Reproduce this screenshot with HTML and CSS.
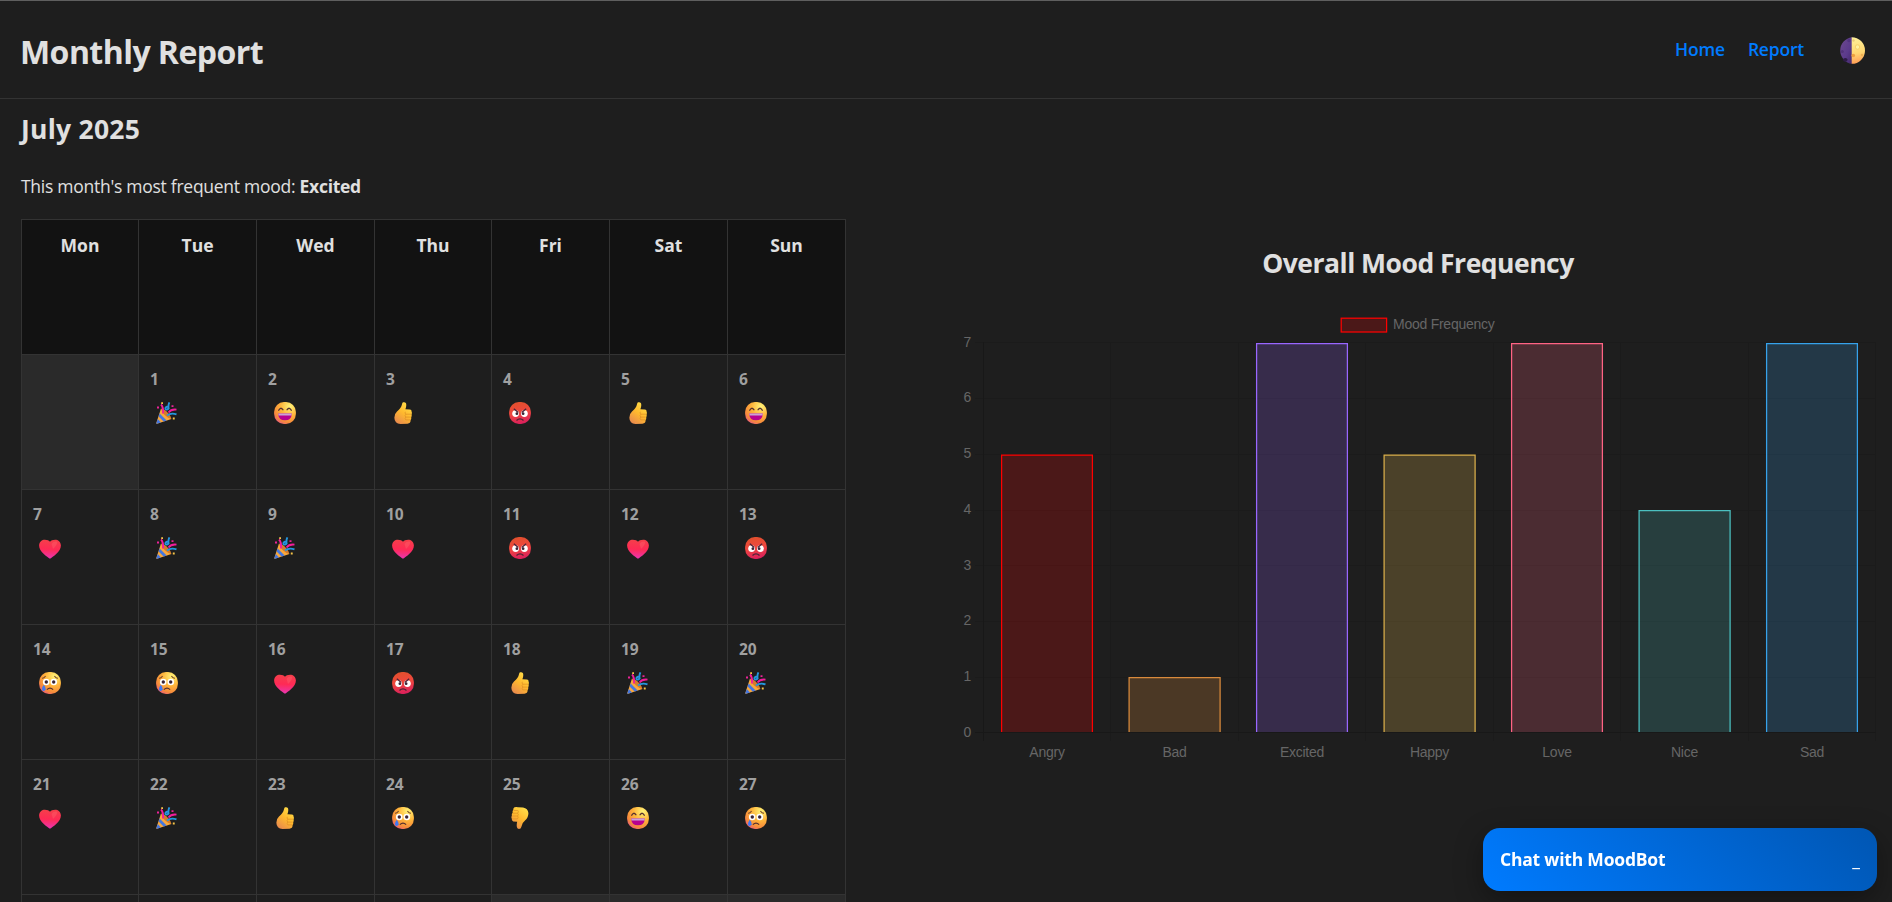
FILE: index.html
```html
<!DOCTYPE html>
<html lang="en">
<head>
<meta charset="utf-8">
<title>Monthly Report</title>
<link rel="stylesheet" href="styles.css">
</head>
<body>
<svg class="defs" width="0" height="0" aria-hidden="true">
  <defs>
    <radialGradient id="gold" cx="0.72" cy="0.2" r="0.95"><stop offset="0" stop-color="#fff478"/><stop offset="0.45" stop-color="#ffb43a"/><stop offset="0.78" stop-color="#f58a3c"/><stop offset="1" stop-color="#e8508c"/></radialGradient>
    <linearGradient id="rage" x1="0.3" y1="0" x2="0.5" y2="1"><stop offset="0" stop-color="#e0502c"/><stop offset="0.5" stop-color="#f0473f"/><stop offset="1" stop-color="#d91f5c"/></linearGradient>
    <linearGradient id="love" x1="0.5" y1="0" x2="0.45" y2="1"><stop offset="0" stop-color="#f4404a"/><stop offset="0.5" stop-color="#ff2a55"/><stop offset="1" stop-color="#e936b4"/></linearGradient>
    <linearGradient id="hand" x1="0.8" y1="0" x2="0.2" y2="1"><stop offset="0" stop-color="#ffe04a"/><stop offset="0.5" stop-color="#ffb92e"/><stop offset="1" stop-color="#e8894e"/></linearGradient>
    <linearGradient id="lit" x1="0.3" y1="0" x2="0.4" y2="1"><stop offset="0" stop-color="#fff09a"/><stop offset="0.6" stop-color="#ffd772"/><stop offset="1" stop-color="#ff9b55"/></linearGradient>
    <linearGradient id="dark" x1="0" y1="0" x2="1" y2="1"><stop offset="0" stop-color="#6d4a8e"/><stop offset="0.6" stop-color="#5b3a8c"/><stop offset="1" stop-color="#43296a"/></linearGradient>
  </defs>
  <symbol id="party" viewBox="0 0 22 22">
    <path d="M5 6.5 15.5 17 1 21.8Q0 22 .3 21z" fill="#f9a83c"/>
    <path d="M3.6 11.5 10.6 18.6 7.6 19.6 2.6 14.6zM1.8 17 5 20.4 1.6 21.6Q0 22 .5 20.8z" fill="#4577e0"/>
    <path d="M5.2 6.8Q9 7 12 11 15 14 15.3 16.8 12 16.5 8.6 13 5.4 9.600 5.200 6.800z" fill="#d67a2c"/>
    <path d="M5 2.500Q7.500 5 7 11.500M12.500 10.500Q15 7 20.500 7.600" stroke="#f31d9b" stroke-width="1.900" fill="none"/>
    <path d="M13.400.400Q12 3 12.600 6.500 10.500 8.500 9.500 7 9 4.800 12.500 4.500M11 13.500Q15 10.500 20.500 12.400" stroke="#2596e0" stroke-width="1.900" fill="none"/>
    <path d="M1 4.600h2v1.800H1zM15.500 3.200h2V5h-2z" fill="#e82396"/>
    <path d="M5.200.300h1.800v1.800H5.200zM16.800 15.600h1.900v1.900h-1.900z" fill="#f7c548"/>
  </symbol>
  <symbol id="happy" viewBox="0 0 22 22">
    <rect x=".1" y=".1" width="21.800" height="21.800" rx="9.800" fill="url(#gold)"/>
    <path d="M4.700 8.200Q6.500 4.600 8.900 7.700M13.100 7.700Q15.500 4.600 17.300 8.200" stroke="#55302f" stroke-width="1.300" fill="none" stroke-linecap="round"/>
    <path d="M4.200 11.400h13.600Q17.500 18.300 11 18.300 4.500 18.300 4.200 11.400z" fill="#b8028f"/>
    <path d="M4.200 11.400h13.600l-.4 2H4.600z" fill="#c9a3d6"/>
  </symbol>
  <symbol id="sad" viewBox="0 0 22 22">
    <rect x=".1" y=".1" width="21.800" height="21.800" rx="9.800" fill="url(#gold)"/>
    <path d="M3.200 6.400Q5.300 5.900 6.600 4M15.400 4Q16.700 5.900 18.800 6.400" stroke="#7b4a2c" stroke-width="1.200" fill="none"/>
    <circle cx="7.200" cy="10" r="3.300" fill="#fff"/><circle cx="14.800" cy="10" r="3.300" fill="#fff"/>
    <circle cx="7.300" cy="10" r="1.700" fill="#3b2537"/><circle cx="14.700" cy="10" r="1.700" fill="#3b2537"/>
    <path d="M7.900 17.600Q11 14.600 14.100 17.600" stroke="#55302f" stroke-width="1.300" fill="none"/>
    <path d="M4.800 12.800Q7 15.500 6.600 17.300 6 19 4.600 19 3 18.800 3 17 3.100 15 4.800 12.800z" fill="#3f78f2"/>
  </symbol>
  <symbol id="angry" viewBox="0 0 22 22">
    <rect x=".1" y=".1" width="21.800" height="21.800" rx="9.800" fill="url(#rage)"/>
    <circle cx="6.600" cy="11.600" r="3.400" fill="#fff"/><circle cx="15.400" cy="11.600" r="3.400" fill="#fff"/>
    <circle cx="7.900" cy="11.700" r="1.400" fill="#3b2537"/><circle cx="14.100" cy="11.700" r="1.400" fill="#3b2537"/>
    <path d="M4.800 6.800 9.300 10.600M17.200 6.800 12.700 10.600M7.500 18.500Q11 15.300 14.500 18.500" stroke="#4d2438" stroke-width="1.300" fill="none"/>
  </symbol>
  <symbol id="heart" viewBox="0 0 22 22">
    <path d="M11 21.800C8.500 19.800 0 15 .1 8.500.2 4.700 3 2.700 5.800 2.700 8.300 2.700 10.200 3.500 11 4.800 11.800 3.500 13.700 2.700 16.200 2.700 19 2.700 21.800 4.700 21.900 8.500 22 15 13.500 19.800 11 21.800z" fill="url(#love)"/>
    <path d="M12.500 7Q14.500 3.800 18 4.800 18.500 8 14 12z" fill="#ff6a72" opacity=".35"/>
  </symbol>
  <symbol id="up" viewBox="0 0 22 22">
    <path d="M11 .3Q13 -.3 14 1.200 14.800 3.500 13.400 7.300L18 7.400Q19.800 7.700 19.500 9.600 20.200 10.600 19.600 12.300 20 13.800 19.200 15.400 19.500 17 18.600 18.100 18.700 21.400 15.500 21.700L8.500 21.900Q2.500 21.500 2.400 16 2.200 12 5 9.500 9.200 6.300 10 2.300 10.200.700 11 .3z" fill="url(#hand)"/>
    <path d="M13.400 9.800Q12.400 11 13.800 12.200 12.400 13.600 13.700 15.100 12.500 16.500 13.800 17.900M13.800 12.200h5.300M13.700 15.100h5M13.800 17.900h4.300" stroke="#dc8f25" stroke-width=".7" fill="none"/>
  </symbol>
  <symbol id="down" viewBox="0 0 22 22">
    <path d="M5.500.300Q7-.2 9 .200L14 .400Q19 1.200 19.400 6 19.500 10.500 16 13.600 12.800 16 12.300 20 12 21.900 9.900 21.900 7.900 21.900 7.800 19.500 7.500 17.500 8.200 14.700L4.300 14.400Q2.500 13.800 2.900 12 1.900 10.300 2.900 8.800 2.400 7 3.700 5.800 3.200 4 4.200 3 4.200 1 5.500.300z" fill="url(#hand)"/>
    <path d="M9 3.500Q10 5 8.600 6.200 10 7.800 8.600 9 9.700 10.500 8.400 11.900M8.800 3.500H4.500M8.600 6.200H4M8.600 9H3.300M8.400 11.900H3.200" stroke="#dc8f25" stroke-width=".7" fill="none"/>
  </symbol>
</svg>

<header class="topbar">
  <h1 class="title">Monthly Report</h1>
  <nav class="nav">
    <a class="nav-link" href="#">Home</a>
    <a class="nav-link report" href="#">Report</a>
    <button class="theme" aria-label="Toggle theme">
      <svg width="27" height="27" viewBox="0 0 27 27">
        <path d="M14 .2A13.400 13.400 0 0 0 14 26.800z" fill="url(#dark)"/>
        <path d="M13.700.2A13.300 13.300 0 0 1 13.700 26.800z" fill="url(#lit)"/>
        <ellipse cx="7.300" cy="22.800" rx="2.300" ry="1.900" fill="#2d1b46"/>
        <circle cx="4.300" cy="14.500" r="1.500" fill="#503279"/><circle cx="11" cy="3.500" r="1.700" fill="#523480"/>
        <circle cx="19.500" cy="10" r="2.200" fill="#fff1a0" stroke="#f5c75c" stroke-width=".7"/>
        <circle cx="15.300" cy="18.500" r="1.800" fill="#eda03f"/><circle cx="24" cy="18" r="1.300" fill="#eeb152"/><circle cx="15.500" cy="3.500" r="1.200" fill="#e9cb75"/>
      </svg>
    </button>
  </nav>
</header>

<main class="page">
  <section class="month">
    <h2 class="heading month-title">July 2025</h2>
    <p class="summary">This month's most frequent mood: <strong>Excited</strong></p>
    <div class="calendar">
      <div class="dow">Mon</div><div class="dow">Tue</div><div class="dow">Wed</div><div class="dow">Thu</div><div class="dow">Fri</div><div class="dow">Sat</div><div class="dow">Sun</div>
      <div class="day empty"></div>
      <div class="day"><b>1</b><svg class="mood"><use href="#party"/></svg></div>
      <div class="day"><b>2</b><svg class="mood"><use href="#happy"/></svg></div>
      <div class="day"><b>3</b><svg class="mood"><use href="#up"/></svg></div>
      <div class="day"><b>4</b><svg class="mood"><use href="#angry"/></svg></div>
      <div class="day"><b>5</b><svg class="mood"><use href="#up"/></svg></div>
      <div class="day"><b>6</b><svg class="mood"><use href="#happy"/></svg></div>
      <div class="day"><b>7</b><svg class="mood"><use href="#heart"/></svg></div>
      <div class="day"><b>8</b><svg class="mood"><use href="#party"/></svg></div>
      <div class="day"><b>9</b><svg class="mood"><use href="#party"/></svg></div>
      <div class="day"><b>10</b><svg class="mood"><use href="#heart"/></svg></div>
      <div class="day"><b>11</b><svg class="mood"><use href="#angry"/></svg></div>
      <div class="day"><b>12</b><svg class="mood"><use href="#heart"/></svg></div>
      <div class="day"><b>13</b><svg class="mood"><use href="#angry"/></svg></div>
      <div class="day"><b>14</b><svg class="mood"><use href="#sad"/></svg></div>
      <div class="day"><b>15</b><svg class="mood"><use href="#sad"/></svg></div>
      <div class="day"><b>16</b><svg class="mood"><use href="#heart"/></svg></div>
      <div class="day"><b>17</b><svg class="mood"><use href="#angry"/></svg></div>
      <div class="day"><b>18</b><svg class="mood"><use href="#up"/></svg></div>
      <div class="day"><b>19</b><svg class="mood"><use href="#party"/></svg></div>
      <div class="day"><b>20</b><svg class="mood"><use href="#party"/></svg></div>
      <div class="day"><b>21</b><svg class="mood"><use href="#heart"/></svg></div>
      <div class="day"><b>22</b><svg class="mood"><use href="#party"/></svg></div>
      <div class="day"><b>23</b><svg class="mood"><use href="#up"/></svg></div>
      <div class="day"><b>24</b><svg class="mood"><use href="#sad"/></svg></div>
      <div class="day"><b>25</b><svg class="mood"><use href="#down"/></svg></div>
      <div class="day"><b>26</b><svg class="mood"><use href="#happy"/></svg></div>
      <div class="day"><b>27</b><svg class="mood"><use href="#sad"/></svg></div>
      <div class="day"></div><div class="day"></div><div class="day"></div><div class="day"></div>
      <div class="day empty"></div><div class="day empty"></div><div class="day empty"></div>
    </div>
  </section>

  <section class="report-chart">
    <h2 class="heading chart-title">Overall Mood Frequency</h2>
    <svg class="chart" width="932" height="460" viewBox="950 310 932 460">
      <g class="grid">
        <path d="M975 342.500H1875.500M975 398.500H1875.500M975 454.500H1875.500M975 510.500H1875.500M975 565.500H1875.500M975 621.500H1875.500M975 677.500H1875.500"/>
        <path d="M1110.500 342V741M1238.500 342V741M1365.500 342V741M1493.500 342V741M1620.500 342V741M1748.500 342V741M1875.500 342V741"/>
        <path class="axis" d="M983.500 342V741M975 732.500H1875.500"/>
      </g>
      <rect x="1341.200" y="318.200" width="45.400" height="13.800" fill="#ff000033" stroke="#f00" stroke-width="1.250"/>
      <text x="1393" y="328.600">Mood Frequency</text>
      <g class="bars">
        <path fill="#ff000033" stroke="#f00" d="M1001.600 732V455.100H1092.400V732"/>
        <path fill="#ff9f4033" stroke="#d98a3c" d="M1129.100 732V677.600H1220.100V732"/>
        <path fill="#9966ff33" stroke="#96f" d="M1256.600 732V343.600H1347.400V732"/>
        <path fill="#ffcd5633" stroke="#d9ae4b" d="M1384.100 732V455.100H1475.100V732"/>
        <path fill="#ff638433" stroke="#ff6384" d="M1511.600 732V343.600H1602.400V732"/>
        <path fill="#4bc0c033" stroke="#4bc0c0" d="M1639.100 732V510.600H1730.100V732"/>
        <path fill="#36a2eb33" stroke="#36a2eb" d="M1766.600 732V343.600H1857.400V732"/>
      </g>
      <g text-anchor="end">
        <text x="971" y="347">7</text><text x="971" y="402">6</text><text x="971" y="458">5</text><text x="971" y="514">4</text><text x="971" y="570">3</text><text x="971" y="625">2</text><text x="971" y="681">1</text><text x="971" y="737">0</text>
      </g>
      <g text-anchor="middle">
        <text x="1047" y="757">Angry</text><text x="1174.500" y="757">Bad</text><text x="1302" y="757">Excited</text><text x="1429.500" y="757">Happy</text><text x="1557" y="757">Love</text><text x="1684.500" y="757">Nice</text><text x="1812" y="757">Sad</text>
      </g>
    </svg>
  </section>
</main>

<aside class="chat">
  <span class="chat-title">Chat with MoodBot</span>
  <span class="minimize">_</span>
</aside>
</body>
</html>
```
FILE: styles.css
```css
* { box-sizing: border-box; }
body {
  margin: 0;
  height: 902px;
  overflow: hidden;
  background: #1e1e1e;
  color: #e0e0e0;
  font-family: "Open Sans", "Noto Sans", sans-serif;
}
.defs { position: absolute; }
.topbar {
  display: flex;
  justify-content: space-between;
  align-items: center;
  height: 99px;
  padding: 0 27px 0 20px;
  border-top: 1px solid #5f5f5f;
  border-bottom: 1px solid #333;
}
.title { margin: 4px 0 0; font-size: 32px; line-height: 44px; letter-spacing: -0.55px; }
.nav { display: flex; align-items: center; margin-bottom: 2px; }
.nav-link {
  color: #007bff;
  font-size: 17.500px;
  font-weight: 600;
  line-height: 24px;
  letter-spacing: -0.2px;
  text-decoration: none;
}
.report { margin-left: 23px; }
.theme { display: flex; margin: 3px 0 0 34px; padding: 0; border: 0; background: none; }
.page { display: flex; height: 803px; overflow: hidden; }
.month { width: 825px; margin-left: 21px; }
.heading { margin: 0; font-size: 26.500px; line-height: 36px; letter-spacing: -0.5px; }
.month-title { margin-top: 12px; letter-spacing: 0.25px; }
.summary { margin: 27px 0 21px; font-size: 17.500px; line-height: 24px; letter-spacing: -0.270px; }
.calendar {
  display: grid;
  grid-template-columns: 116px 117px 117px 116px 117px 117px 117px;
  grid-auto-rows: 134px;
  gap: 1px;
  padding: 1px;
  background: #333;
}
.dow {
  padding-top: 13px;
  background: #121212;
  font-size: 17.500px;
  font-weight: 700;
  line-height: 24px;
  text-align: center;
}
.day { padding: 13px 0 0 11px; background: #1e1e1e; }
.empty { background: #2a2a2a; }
.day b { display: block; color: #a0a0a0; font-size: 15.500px; line-height: 22px; }
.mood { display: block; width: 22px; height: 22px; margin: 12px 0 0 6px; }
.report-chart { width: 932px; margin: 146px 0 0 104px; }
.chart-title { padding-left: 4px; text-align: center; }
.chart { display: block; margin-top: 29px; }
.chart text { fill: #666; font: 14px "Liberation Sans", Arial, sans-serif; letter-spacing: -0.25px; }
.grid { fill: none; stroke: #1b1b1b; }
.axis { stroke: #181818; }
.bars { stroke-width: 1.250px; }
.chat {
  position: fixed;
  left: 1483px;
  top: 828px;
  display: flex;
  justify-content: space-between;
  align-items: center;
  width: 394px;
  height: 63px;
  padding: 0 17px 1px;
  border-radius: 17px;
  background: linear-gradient(45deg, #007bff, #0056b3);
  box-shadow: 0 9px 28px rgba(0, 0, 0, 0.35);
  color: #fff;
}
.chat-title { font-size: 17.500px; font-weight: 700; letter-spacing: -0.2px; }
.minimize { font-size: 17.500px; line-height: 24px; }
```
